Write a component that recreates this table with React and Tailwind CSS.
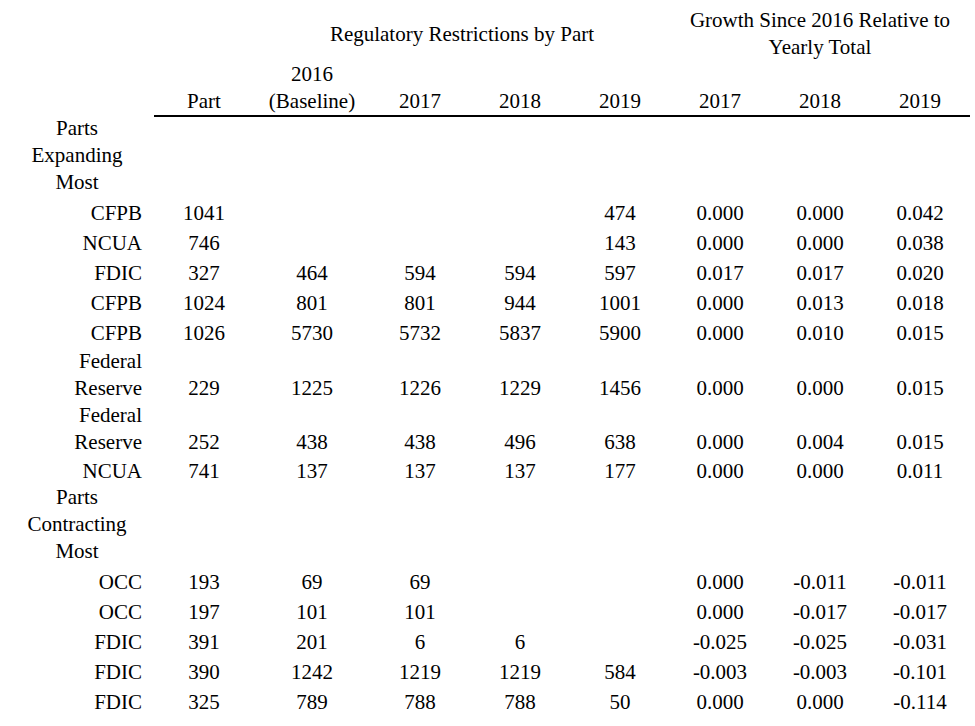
const cols = "grid grid-cols-[154px_100px_116px_100px_100px_100px_100px_100px_100px]";

const expanding = [
  ["CFPB", "1041", "", "", "", "474", "0.000", "0.000", "0.042"],
  ["NCUA", "746", "", "", "", "143", "0.000", "0.000", "0.038"],
  ["FDIC", "327", "464", "594", "594", "597", "0.017", "0.017", "0.020"],
  ["CFPB", "1024", "801", "801", "944", "1001", "0.000", "0.013", "0.018"],
  ["CFPB", "1026", "5730", "5732", "5837", "5900", "0.000", "0.010", "0.015"],
  ["Federal Reserve", "229", "1225", "1226", "1229", "1456", "0.000", "0.000", "0.015"],
  ["Federal Reserve", "252", "438", "438", "496", "638", "0.000", "0.004", "0.015"],
  ["NCUA", "741", "137", "137", "137", "177", "0.000", "0.000", "0.011"],
];

const contracting = [
  ["OCC", "193", "69", "69", "", "", "0.000", "-0.011", "-0.011"],
  ["OCC", "197", "101", "101", "", "", "0.000", "-0.017", "-0.017"],
  ["FDIC", "391", "201", "6", "6", "", "-0.025", "-0.025", "-0.031"],
  ["FDIC", "390", "1242", "1219", "1219", "584", "-0.003", "-0.003", "-0.101"],
  ["FDIC", "325", "789", "788", "788", "50", "0.000", "0.000", "-0.114"],
];

function DataRow({ row }) {
  const twoLines = row[0].includes(" ");
  return (
    <div className={`${cols} items-end ${twoLines ? "" : "py-[1.5px]"}`}>
      {row.map((cell, i) => (
        <div key={i} className={`px-3 ${i === 0 ? "text-right" : "text-center"}`}>
          {cell}
        </div>
      ))}
    </div>
  );
}

function GroupRow({ label }) {
  return (
    <div className={`${cols} -mt-0.5 mb-0.5`}>
      <div className="px-3 text-center">{label}</div>
    </div>
  );
}

export default function App() {
  return (
    <div className="min-h-screen bg-white pt-[7px] text-[21px] leading-[27px] text-black font-['Liberation_Serif','Times_New_Roman',serif]">
      <div className={cols}>
        <div className="col-span-2" />
        <div className="col-span-4 self-center px-3 text-center">Regulatory Restrictions by Part</div>
        <div className="col-span-3 px-3 text-center">Growth Since 2016 Relative to Yearly Total</div>
      </div>
      <div className={`${cols} items-end`}>
        <div />
        {["Part", "2016 (Baseline)", "2017", "2018", "2019", "2017", "2018", "2019"].map((h, i) => (
          <div key={i} className="h-full flex items-end justify-center border-b-2 border-black px-3 text-center">
            {h}
          </div>
        ))}
      </div>
      <GroupRow label="Parts Expanding Most" />
      {expanding.map((r, i) => (
        <DataRow key={i} row={r} />
      ))}
      <GroupRow label="Parts Contracting Most" />
      {contracting.map((r, i) => (
        <DataRow key={i} row={r} />
      ))}
    </div>
  );
}
